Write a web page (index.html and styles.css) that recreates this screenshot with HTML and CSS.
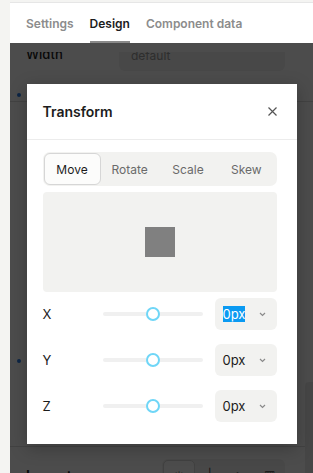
FILE: index.html
```html
<!DOCTYPE html>
<html lang="en">
<head>
    <meta charset="UTF-8">
    <meta name="viewport" content="width=device-width, initial-scale=1.0">
    <title>Transform</title>
    <link rel="stylesheet" href="styles.css">
</head>
<body>
    <div class="app">
        <aside class="rail"></aside>

        <section class="panel">
            <header class="panel-header">
                <nav class="tabs">
                    <span class="tab">Settings</span>
                    <span class="tab active">Design</span>
                    <span class="tab">Component data</span>
                </nav>
            </header>

            <div class="panel-body">
                <div class="field-row">
                    <span class="field-label">Width</span>
                    <div class="field-input">default</div>
                </div>
                <div class="group group-top">
                    <span class="marker"></span>
                </div>
                <div class="group group-mid">
                    <span class="marker"></span>
                </div>
                <div class="layout-row">
                    <span class="section-label">Layout</span>
                    <div class="layout-buttons">
                        <span class="layout-btn active">&#10035;</span>
                        <span class="layout-btn">|</span>
                        <span class="layout-btn">&gt;</span>
                        <span class="layout-btn">&#9638;</span>
                    </div>
                </div>
                <div class="scrollbar"></div>
            </div>

            <div class="overlay">
                <div class="modal">
                    <div class="modal-header">
                        <h2>Transform</h2>
                        <button class="close-button" aria-label="Close">
                            <svg width="9" height="9" viewBox="0 0 9 9">
                                <path d="M0.5 0.5 L8.5 8.5 M8.5 0.5 L0.5 8.5" stroke="#555" stroke-width="1.2" fill="none"/>
                            </svg>
                        </button>
                    </div>

                    <div class="modal-body">
                        <div class="segmented">
                            <span class="segment active">Move</span>
                            <span class="segment">Rotate</span>
                            <span class="segment">Scale</span>
                            <span class="segment">Skew</span>
                        </div>

                        <div class="preview">
                            <div class="preview-box"></div>
                        </div>

                        <div class="axis-list">
                            <div class="axis-row">
                                <span class="axis-label">X</span>
                                <div class="slider"><span class="thumb"></span></div>
                                <div class="unit-input">
                                    <span class="value selected">0px</span>
                                    <svg class="chevron" width="7" height="5" viewBox="0 0 7 5">
                                        <path d="M1 1 L3.5 3.5 L6 1" stroke="#8a8a8a" stroke-width="1.2" fill="none"/>
                                    </svg>
                                </div>
                            </div>
                            <div class="axis-row">
                                <span class="axis-label">Y</span>
                                <div class="slider"><span class="thumb"></span></div>
                                <div class="unit-input">
                                    <span class="value">0px</span>
                                    <svg class="chevron" width="7" height="5" viewBox="0 0 7 5">
                                        <path d="M1 1 L3.5 3.5 L6 1" stroke="#8a8a8a" stroke-width="1.2" fill="none"/>
                                    </svg>
                                </div>
                            </div>
                            <div class="axis-row">
                                <span class="axis-label">Z</span>
                                <div class="slider"><span class="thumb"></span></div>
                                <div class="unit-input">
                                    <span class="value">0px</span>
                                    <svg class="chevron" width="7" height="5" viewBox="0 0 7 5">
                                        <path d="M1 1 L3.5 3.5 L6 1" stroke="#8a8a8a" stroke-width="1.2" fill="none"/>
                                    </svg>
                                </div>
                            </div>
                        </div>
                    </div>
                </div>
            </div>
        </section>
    </div>
</body>
</html>
```

FILE: styles.css
```css
* {
    box-sizing: border-box;
}

body {
    margin: 0;
    font-family: 'Inter', 'Roboto', sans-serif;
    color: #1c1c1c;
    background-color: #f4f4f2;
    overflow: hidden;
}

.app {
    display: flex;
    height: 473px;
}

.rail {
    width: 10px;
    flex-shrink: 0;
    background-color: #f4f4f2;
}

.panel {
    position: relative;
    flex: 1;
    display: flex;
    flex-direction: column;
    background-color: #ffffff;
    border-top: 1px solid #e6e6e6;
    margin-top: 2px;
    overflow: hidden;
}

/* tabs */
.panel-header {
    height: 49px;
    flex-shrink: 0;
    background-color: #ffffff;
}

.tabs {
    display: flex;
    gap: 16px;
    height: 40px;
    padding: 0 16px;
    align-items: stretch;
}

.tab {
    display: flex;
    align-items: center;
    font-size: 12px;
    font-weight: 600;
    color: #8c8c8c;
    border-bottom: 2px solid transparent;
    padding-top: 2px;
}

.tab.active {
    color: #1c1c1c;
    border-bottom-color: #8a8a8a;
}

/* content under the dialog */
.panel-body {
    position: relative;
    flex: 1;
    overflow: hidden;
}

.field-row {
    display: flex;
    align-items: flex-start;
    height: 25px;
    margin-top: -6px;
    padding: 0 16px;
}

.field-label {
    width: 93px;
    font-size: 13px;
    line-height: 16px;
    font-weight: 500;
}

.field-input {
    width: 166px;
    height: 25px;
    padding: 2px 12px 0;
    font-size: 12px;
    line-height: 16px;
    color: #999;
    background-color: #f1f1f1;
    border-radius: 6px;
}

.group {
    position: relative;
    border-bottom: 1px solid #dcdcdc;
}

.group-top {
    height: 31px;
}

.group-mid {
    height: 345px;
}

.marker {
    position: absolute;
    left: 7px;
    width: 4px;
    height: 4px;
    border-radius: 50%;
    background-color: #2a7de8;
}

.group-top .marker {
    top: 22px;
}

.group-mid .marker {
    top: 257px;
}

.layout-row {
    display: flex;
    align-items: flex-start;
    padding: 12px 16px 0;
}

.section-label {
    width: 136px;
    padding-top: 8px;
    font-size: 14px;
    font-weight: 600;
}

.layout-buttons {
    display: flex;
    width: 123px;
    height: 30px;
    padding: 1px;
    background-color: #f2f2f0;
    border-radius: 6px;
}

.layout-btn {
    flex: 1;
    text-align: center;
    font-size: 12px;
    padding-top: 7px;
    color: #444;
}

.layout-btn.active {
    background-color: #ffffff;
    border: 1px solid #d9d9d9;
    border-radius: 5px;
}

.scrollbar {
    position: absolute;
    right: 0;
    top: 330px;
    width: 8px;
    height: 120px;
    background-color: #ececec;
    border-radius: 4px 0 0 0;
}

/* dialog */
.overlay {
    position: absolute;
    top: 40px;
    left: 0;
    right: 0;
    bottom: 0;
    background-color: rgba(0, 0, 0, 0.7);
    display: flex;
    justify-content: center;
    align-items: flex-start;
    padding-top: 41px;
}

.modal {
    width: 270px;
    height: 360px;
    background-color: #ffffff;
    box-shadow: 0 4px 16px rgba(0, 0, 0, 0.25);
}

.modal-header {
    display: flex;
    align-items: center;
    justify-content: space-between;
    height: 56px;
    padding: 0 20px 0 16px;
    border-bottom: 1px solid #ececec;
}

.modal-header h2 {
    margin: 0;
    font-size: 14px;
    font-weight: 600;
}

.close-button {
    display: flex;
    padding: 0;
    background: none;
    border: none;
}

.modal-body {
    padding: 12px 20px 0 16px;
}

.segmented {
    display: flex;
    height: 34px;
    padding: 1px;
    background-color: #f2f2f0;
    border-radius: 7px;
}

.segment {
    flex: 1;
    display: flex;
    align-items: center;
    justify-content: center;
    font-size: 12px;
    color: #6a6a6a;
}

.segment.active {
    flex: 0 0 57px;
    color: #1c1c1c;
    background-color: #fcfcfb;
    border: 1px solid #d6d6d6;
    border-radius: 6px;
}

.preview {
    display: flex;
    align-items: center;
    justify-content: center;
    height: 100px;
    margin-top: 6px;
    background-color: #f2f2f0;
    border-radius: 4px;
}

.preview-box {
    width: 30px;
    height: 30px;
    background-color: #808080;
}

.axis-list {
    display: flex;
    flex-direction: column;
    gap: 14px;
    margin-top: 6px;
}

.axis-row {
    display: flex;
    align-items: center;
    height: 32px;
}

.axis-label {
    width: 60px;
    font-size: 13px;
}

.slider {
    position: relative;
    width: 100px;
    height: 4px;
    background-color: #f0f0f0;
    border-radius: 2px;
}

.thumb {
    position: absolute;
    left: 43px;
    top: -5px;
    width: 14px;
    height: 14px;
    border: 2px solid #6fd6f7;
    border-radius: 50%;
    background-color: #ffffff;
}

.unit-input {
    display: flex;
    align-items: center;
    justify-content: space-between;
    width: 62px;
    height: 32px;
    margin-left: 12px;
    padding: 0 11px 0 8px;
    background-color: #f2f2f0;
    border-radius: 6px;
}

.value {
    font-size: 13px;
    line-height: 16px;
}

.value.selected {
    background-color: #0a9af2;
    color: #ffffff;
}
```
